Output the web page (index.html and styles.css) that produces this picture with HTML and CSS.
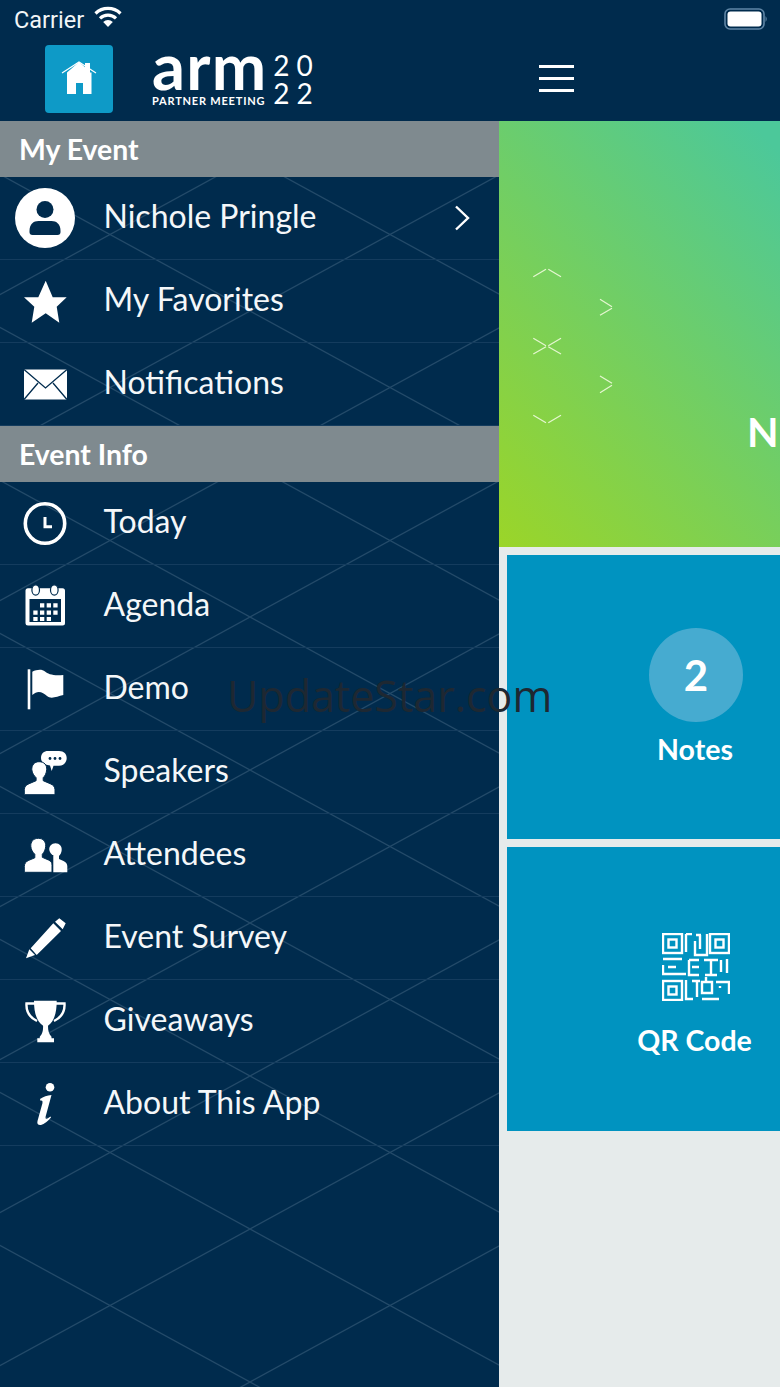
FILE: index.html
```html
<!DOCTYPE html>
<html lang="en">
<head>
  <meta charset="UTF-8" />
  <meta name="viewport" content="width=device-width, initial-scale=1.0" />
  <title>Arm Partner Meeting 2022</title>
  <link rel="stylesheet" href="styles.css">
</head>
<body>
  <div class="app">
    <header class="topbar">
      <div class="status">
        <span class="carrier">Carrier</span>
        <svg class="wifi" width="28" height="22" viewBox="0 0 28 22">
          <path d="M1.500 7.500a18 18 0 0 1 25 0" fill="none" stroke="#fff" stroke-width="3.200"/>
          <path d="M6 12.300a11.600 11.600 0 0 1 16 0" fill="none" stroke="#fff" stroke-width="3.200"/>
          <path d="M14 21l-4.800-5a7 7 0 0 1 9.600 0z" fill="#fff"/>
        </svg>
        <svg class="battery" width="44" height="22" viewBox="0 0 44 22">
          <rect x="1" y="1" width="39" height="20" rx="5" fill="none" stroke="#5f86a6" stroke-width="1.600"/>
          <rect x="3.500" y="3.500" width="34" height="15" rx="3" fill="#fff"/>
          <path d="M41.500 8q2.500 3 0 6z" fill="#5f86a6"/>
        </svg>
      </div>
      <div class="brand-row">
        <div class="home-tile">
          <svg width="68" height="68" viewBox="0 0 68 68">
            <path d="M22 27.500L34 17l6 5.200V18h5v9.500l1.500 0V49H38V38h-7v11H22z" fill="#fff"/>
            <path d="M17 28L34 17l17 11" fill="none" stroke="#fff" stroke-width="1.200"/>
          </svg>
        </div>
        <div class="logo">
          <div class="logo-left">
            <div class="logo-arm">arm</div>
            <div class="logo-sub">PARTNER MEETING</div>
          </div>
          <div class="logo-year"><span>20</span><span>22</span></div>
        </div>
        <div class="burger"><span></span><span></span><span></span></div>
      </div>
    </header>

    <div class="content">
      <nav class="sidebar">
        <svg class="lattice" width="499" height="1266">
          <defs>
            <pattern id="diamonds" patternUnits="userSpaceOnUse" x="250" y="37" width="280" height="153">
              <path d="M0 0L280 153M0 153L280 0" stroke="#234a69" stroke-width="1.200" fill="none"/>
            </pattern>
          </defs>
          <rect width="499" height="1266" fill="url(#diamonds)"/>
        </svg>

        <div class="section">My Event</div>
        <a class="row">
          <svg class="icon" viewBox="0 0 60 60">
            <circle cx="30" cy="30" r="30" fill="#fff"/>
            <circle cx="30" cy="21.500" r="8.500" fill="#002b4d"/>
            <path d="M14.500 43c0-7 4-10 9-10h13c5 0 9 3 9 10v1c0 2-1 3-3 3H17.500c-2 0-3-1-3-3z" fill="#002b4d"/>
          </svg>
          <span class="label">Nichole Pringle</span>
          <svg class="chevron" width="16" height="26" viewBox="0 0 16 26">
            <path d="M2 1.500L14 13 2 24.500" fill="none" stroke="#fff" stroke-width="2.400"/>
          </svg>
        </a>
        <a class="row">
          <svg class="icon" viewBox="0 0 60 60">
            <path d="M30.700 9.700L37.700 26.300H51.700L41.700 35.700 44.300 51.700 30.700 42.300 16.700 51.700 19.300 35.700 9 26.300H23.300z" fill="#fff"/>
          </svg>
          <span class="label">My Favorites</span>
        </a>
        <a class="row">
          <svg class="icon" viewBox="0 0 60 60">
            <rect x="9" y="15.500" width="43" height="30" fill="#fff"/>
            <path d="M9 15.500L30.500 34 52 15.500M9 45.500L23 29M52 45.500L38 29" fill="none" stroke="#002b4d" stroke-width="1.300"/>
          </svg>
          <span class="label">Notifications</span>
        </a>

        <div class="section">Event Info</div>
        <a class="row">
          <svg class="icon" viewBox="0 0 60 60">
            <circle cx="30" cy="30.500" r="19.700" fill="none" stroke="#fff" stroke-width="3.600"/>
            <path d="M30 24v9.700h7" fill="none" stroke="#fff" stroke-width="3"/>
          </svg>
          <span class="label">Today</span>
        </a>
        <a class="row">
          <svg class="icon" viewBox="0 0 60 60">
            <rect x="10.500" y="12.300" width="39.500" height="37.200" rx="2.500" fill="#fff"/>
            <ellipse cx="20.700" cy="14" rx="3.800" ry="5.200" fill="#fff" stroke="#002b4d" stroke-width="1.200"/>
            <ellipse cx="39.300" cy="14" rx="3.800" ry="5.200" fill="#fff" stroke="#002b4d" stroke-width="1.200"/>
            <rect x="14.500" y="23" width="31.500" height="23" fill="#002b4d"/>
            <path d="M25 27.300h4.300v4.300H25zM31.700 27.300H36v4.300h-4.300zM38.300 27.300h4.300v4.300h-4.300zM18.300 34.500h4.300v4.300h-4.300zM25 34.500h4.300v4.300H25zM31.700 34.500H36v4.300h-4.300zM38.300 34.500h4.300v4.300h-4.300zM18.300 41h4.300v4h-4.300zM25 41h4.300v4H25zM31.700 41H36v4h-4.300z" fill="#fff"/>
          </svg>
          <span class="label">Agenda</span>
        </a>
        <a class="row">
          <svg class="icon" viewBox="0 0 60 60">
            <rect x="12.700" y="10.300" width="2.600" height="40" fill="#fff"/>
            <path d="M17.300 12.700C22 10.500 27 10 30 12.500S38 17 48.300 16V36C42 37.500 36 40.500 32 37S23 30.500 17.300 36z" fill="#fff"/>
          </svg>
          <span class="label">Demo</span>
        </a>
        <a class="row">
          <svg class="icon" viewBox="0 0 60 60">
            <path d="M33 9h11c5 0 7.700 3 7.700 7s-2.700 7.700-7.700 7.700h-5.500L36.700 29 35 23.500c-5-.5-9-3-9-7.500s3-7 7-7z" fill="#fff"/>
            <circle cx="35" cy="16.500" r="1.400" fill="#002b4d"/><circle cx="40" cy="16.500" r="1.400" fill="#002b4d"/><circle cx="45" cy="16.500" r="1.400" fill="#002b4d"/>
            <path d="M24 19.700c5.500 0 8 3.500 7.700 8-.3 3.500-1.500 6-3.500 8v3l7 3c3.500 1.500 4.500 3 4.800 6v5H9.300v-5c.3-3 1.300-4.500 4.800-6l7-3v-3c-2-2-4-4.500-4.300-8-.3-4.500 2.700-8 7.200-8z" fill="#fff" stroke="#002b4d" stroke-width="1"/>
          </svg>
          <span class="label">Speakers</span>
        </a>
        <a class="row">
          <svg class="icon" viewBox="0 0 60 60">
            <path d="M40.500 18.300c4 0 6.500 3 6.200 6.700-.2 2.500-1.200 4.500-2.700 6v3l4.500 2c2.500 1.200 3.500 2.500 3.800 5v6.300H38.300V30h-1c-1-1-2.700-3-3-5-.3-3.700 2.200-6.700 6.200-6.700z" fill="#fff"/>
            <path d="M23.300 13.300c5 0 7.700 3.500 7.400 8-.3 3.500-1.500 6-3.400 8v3l6.200 2.700c3 1.300 3.500 3 3.500 5.500v6.800H9.300v-6c.3-3 1.300-4.500 4.500-6l6-2.500v-3.500c-2-2-3.800-4.500-4-8-.3-4.500 2.500-8 7.500-8z" fill="#fff" stroke="#002b4d" stroke-width="1"/>
          </svg>
          <span class="label">Attendees</span>
        </a>
        <a class="row">
          <svg class="icon" viewBox="0 0 60 60">
            <path d="M11 50.300L14.300 41.300 20 47zM15.700 40.300L38.300 15.300 46 23 21.700 47zM40 13.700L44.300 10.300 50.700 15.300 47.700 21.300z" fill="#fff"/>
          </svg>
          <span class="label">Event Survey</span>
        </a>
        <a class="row">
          <svg class="icon" viewBox="0 0 60 60">
            <path d="M19 9.700h22.700c0 10-1.500 20-8.700 25 0 5 .8 8 3.500 11v1.600H39v4H22.300v-4h2.500V45.700c2.700-3 3.300-6 3.300-11-7.500-5-9.100-15-9.100-25z" fill="#fff"/>
            <path d="M20 12.500h-8.500c-.5 8 3 14 10.500 17.500M41 12.500h8.500c.5 8-3 14-10.500 17.500" fill="none" stroke="#fff" stroke-width="2.400"/>
          </svg>
          <span class="label">Giveaways</span>
        </a>
        <a class="row">
          <svg class="icon" viewBox="0 0 60 60">
            <circle cx="35" cy="13.300" r="4.300" fill="#fff"/>
            <path d="M25 25q5-3.500 11.500-4l-6 22q-.5 2.500 2 1.500l3-2 .5 1q-5 6-10 7.500-4.500.5-3.500-4l5-18q.5-3-2-2.300z" fill="#fff"/>
          </svg>
          <span class="label">About This App</span>
        </a>
      </nav>

      <main class="main">
        <section class="hero">
          <svg class="hero-marks" width="90" height="165" viewBox="0 0 90 165">
            <path d="M3.300 11.700L16 4.300M18.300 4.300L31 11.700M70 34.300L82 41.700M82 43.300L70 50.300M3.300 73.300L16 80.700M31 73.300L18.300 80.700M3.300 89L16 81.700M18.300 81.700L31 89M70 111L82 118.300M82 120.300L70 127.700M3.300 150.300L16 157.700M31 150.300L18.300 157.700" fill="none" stroke="#e4f6cf" stroke-width="1.300"/>
          </svg>
          <div class="hero-name">N</div>
        </section>
        <section class="card">
          <div class="badge">2</div>
          <div class="card-title">Notes</div>
        </section>
        <section class="card card-qr">
          <svg class="qr" width="68" height="68" viewBox="0 0 68 68">
            <g fill="none" stroke="#fff" stroke-width="2.400">
              <rect x="1" y="1" width="19" height="19"/><rect x="6.500" y="6.500" width="8" height="8"/>
              <rect x="48" y="1" width="19" height="19"/><rect x="53.500" y="6.500" width="8" height="8"/>
              <rect x="1" y="48" width="19" height="19"/><rect x="6.500" y="53.500" width="8" height="8"/>
              <path d="M24 1h6M24 1v18M34 2h5M38 2v14M33 8v14h12V1"/>
              <path d="M1 26h19M1 32v9h4M6 34h8M5 41h19M27 27h10M27 27v15h10M30 34h7M42 27h14M49 27v15M43 42h12M59 27v12M65 26v14"/>
              <path d="M24 47v19h7M35 48v16M30 48h8M40 49h10v11H40zM44 49V44M54 49h13v12M58 55v-2M40 66h17"/>
            </g>
          </svg>
          <div class="card-title">QR Code</div>
        </section>
      </main>
    </div>

    <div class="watermark">UpdateStar.com</div>
  </div>
</body>
</html>
```
FILE: styles.css
```css
* { box-sizing: border-box; }
html, body { margin: 0; padding: 0; }
body { font-family: Lato, "Liberation Sans", sans-serif; color: #fff; background: #e6ebeb; }

.app { position: relative; width: 780px; height: 1387px; overflow: hidden; }

.topbar { height: 121px; background: #002b4d; }
.status { display: flex; align-items: center; height: 45px; padding: 0 14px 6px; }
.carrier { font-family: Roboto, sans-serif; font-size: 23.500px; color: #f2f5f7; }
.wifi { margin-left: 10px; margin-top: -6px; }
.battery { margin-left: auto; margin-right: -2px; margin-top: -2px; }

.brand-row { display: flex; align-items: flex-start; padding-left: 45px; }
.home-tile { width: 68px; height: 68px; border-radius: 4px; background: #0e9ac7; }
.home-tile svg { display: block; }

.logo { display: flex; margin-left: 39px; margin-top: -6px; }
.logo-arm { font-size: 65px; font-weight: 700; line-height: 52px; height: 54px; letter-spacing: 1.200px; }
.logo-sub { font-size: 11px; font-weight: 700; letter-spacing: .8px; line-height: 12px; margin-top: 2px; }
.logo-year { display: flex; flex-direction: column; margin-left: 6px; margin-top: 12px; font-size: 28px; font-weight: 400; line-height: 28px; letter-spacing: 7px; }

.burger { display: flex; flex-direction: column; gap: 8.500px; width: 35px; margin-left: 219px; margin-top: 20px; }
.burger span { display: block; height: 3.400px; background: #fff; }

.content { display: flex; height: 1266px; }

.sidebar { position: relative; flex: none; width: 499px; background: #002b4d; }
.lattice { position: absolute; top: 0; left: 0; }

.section { position: relative; display: flex; align-items: center; height: 56px; padding-left: 19px; background: #7f8a8f; font-size: 28.400px; font-weight: 700; }

.row { position: relative; display: flex; align-items: center; height: 83px; padding-left: 15px; border-bottom: 1px solid #143c5e; }
.icon { flex: none; width: 60px; height: 60px; margin-right: 28.500px; }
.label { font-size: 32px; font-weight: 400; color: #f4f7f9; margin-bottom: 6px; }
.chevron { margin-left: auto; margin-right: 29px; }

.main { flex: none; width: 394px; }
.hero { display: flex; align-items: flex-start; height: 426px; padding: 144px 0 0 31px; background: linear-gradient(to top right, #9bd528 0%, #4cc89a 82%); }
.hero-marks { flex: none; }
.hero-name { margin-left: 127px; margin-top: 143px; font-size: 41px; font-weight: 700; line-height: 48px; }

.card { display: flex; flex-direction: column; align-items: center; height: 284px; margin: 8px 0 0 8px; width: 378px; padding-top: 73px; background: #0093c0; }
.badge { display: flex; align-items: center; justify-content: center; width: 94px; height: 94px; border-radius: 50%; background: #46abd0; font-size: 42px; font-weight: 700; }
.card-title { margin-top: 10px; font-size: 28.500px; font-weight: 700; line-height: 34px; margin-right: 2px; }
.card-qr { padding-top: 86px; }
.qr { display: block; }
.card-qr .card-title { margin-top: 22px; margin-right: 3px; }

.watermark { position: absolute; left: 227px; top: 666px; font-family: "Open Sans", sans-serif; font-size: 43px; line-height: 60px; color: #1e2832; }
```
